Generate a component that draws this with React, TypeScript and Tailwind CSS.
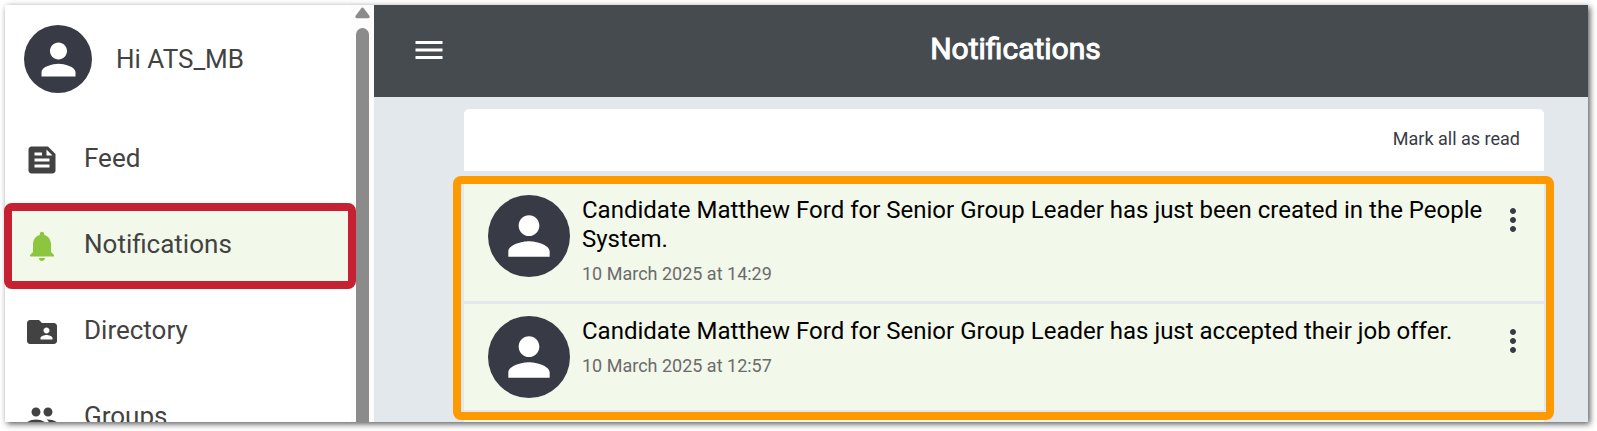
import type { ReactNode } from "react";
import type { IconType } from "react-icons";
import {
  MdFeed,
  MdFolderShared,
  MdMenu,
  MdMoreVert,
  MdNotifications,
  MdPeople,
  MdPerson,
} from "react-icons/md";

const navItems: { label: string; icon: IconType; active?: boolean }[] = [
  { label: "Feed", icon: MdFeed },
  { label: "Notifications", icon: MdNotifications, active: true },
  { label: "Directory", icon: MdFolderShared },
  { label: "Groups", icon: MdPeople },
];

const notifications = [
  {
    text: "Candidate Matthew Ford for Senior Group Leader has just been created in the People System.",
    date: "10 March 2025 at 14:29",
  },
  {
    text: "Candidate Matthew Ford for Senior Group Leader has just accepted their job offer.",
    date: "10 March 2025 at 12:57",
  },
];

function Avatar({ className, children }: { className: string; children: ReactNode }) {
  return (
    <span
      className={`flex shrink-0 items-center justify-center rounded-full bg-[#383a46] text-white ${className}`}
    >
      {children}
    </span>
  );
}

function Sidebar() {
  return (
    <aside className="flex w-[369px] shrink-0 bg-white text-[26px] leading-8 text-[#424242]">
      <div className="min-w-0 flex-1">
        <div className="flex items-center gap-6 pt-5 pb-6 pl-[19px]">
          <Avatar className="size-[68px]">
            <MdPerson className="size-[51px]" />
          </Avatar>
          <span>Hi ATS_MB</span>
        </div>
        <nav>
          {navItems.map(({ label, icon: Icon, active }) => (
            <a
              key={label}
              href="#"
              aria-current={active ? "page" : undefined}
              className={`relative flex h-[86px] items-center gap-6 pl-[19px] ${active ? "bg-[#f2f8ea]" : ""}`}
            >
              <Icon className={`size-9 ${active ? "text-[#8cc63f]" : "text-[#424242]"}`} />
              <span className="pb-1">{label}</span>
              {active && (
                <span className="absolute -right-[5px] -left-px inset-y-0 rounded-lg border-8 border-[#c62033]" />
              )}
            </a>
          ))}
        </nav>
      </div>
      <div className="flex w-[23px] flex-col items-center bg-[#fcfcfc] pt-[2px]">
        <svg viewBox="0 0 15 12" className="h-3 w-[15px] shrink-0 fill-[#8b8b8b]">
          <path d="M6.3 1.2Q7.5 0 8.7 1.2L14.4 8.8Q15.3 11 13.3 11.2H1.7Q-.3 11 .6 8.8Z" />
        </svg>
        <div className="mt-[9px] w-[13px] flex-1 rounded-t-full bg-[#8b8b8b]" />
      </div>
    </aside>
  );
}

export default function App() {
  return (
    <div className="h-screen overflow-hidden bg-white pt-[5px] pr-[9px] pb-[9px] pl-[5px] font-[Roboto,sans-serif]">
      <div className="h-full shadow-[2px_2px_6px_rgba(0,0,0,0.65)]">
        <div className="flex h-full overflow-y-clip">
          <Sidebar />
          <div className="flex min-w-0 flex-1 flex-col bg-[#e3e8ec]">
            <header className="flex h-[92px] shrink-0 items-center bg-[#464b4f] pr-1 pl-[37px] text-white">
              <button type="button" aria-label="Toggle menu" className="pb-0.5">
                <MdMenu className="size-9" />
              </button>
              <h1 className="flex-1 pb-1 text-center text-[30px] leading-9 font-normal [-webkit-text-stroke:1px_white]">
                Notifications
              </h1>
            </header>
            <main className="pt-3 pr-11 pl-[90px]">
              <div className="flex h-[62px] items-center justify-end rounded-t-[5px] bg-white pr-6 pb-0.5">
                <button type="button" className="text-[18px] leading-6 text-[#383a46]">
                  Mark all as read
                </button>
              </div>
              <div className="relative mt-3">
                <ul className="flex flex-col gap-[3px]">
                  {notifications.map((item) => (
                    <li key={item.date} className="flex items-start gap-3 bg-[#f2f8ea] py-3 pr-[13px] pl-6">
                      <Avatar className="size-[82px]">
                        <MdPerson className="size-[62px]" />
                      </Avatar>
                      <div className="min-w-0 flex-1 py-px">
                        <p className="text-[24px] leading-[29px] text-black">{item.text}</p>
                        <p className="pt-1.5 text-[18px] leading-7 text-[#6b6b6b]">{item.date}</p>
                      </div>
                      <button type="button" aria-label="More options" className="mt-[7px] text-[#383a46]">
                        <MdMoreVert className="size-9" />
                      </button>
                    </li>
                  ))}
                </ul>
                <div className="pointer-events-none absolute -top-[7px] -right-[10px] -bottom-[10px] -left-[11px] rounded-lg border-8 border-[#ff9900]" />
              </div>
              <div className="mt-[3px] h-[106px] bg-[#f2f8ea]" />
            </main>
          </div>
        </div>
      </div>
    </div>
  );
}
